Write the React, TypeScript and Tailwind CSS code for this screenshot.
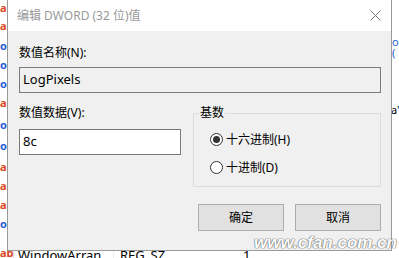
import React from 'react';

const rows: { y: number; kind: 'ab' | 'bin' }[] = [
  { y: -2, kind: 'ab' },
  { y: 16, kind: 'ab' },
  { y: 36, kind: 'bin' },
  { y: 55, kind: 'bin' },
  { y: 74, kind: 'bin' },
  { y: 93, kind: 'ab' },
  { y: 115, kind: 'bin' },
  { y: 136, kind: 'bin' },
  { y: 157, kind: 'ab' },
  { y: 176, kind: 'ab' },
  { y: 195, kind: 'ab' },
  { y: 214, kind: 'bin' },
];

function Radio({ checked, label }: { checked?: boolean; label: string }) {
  return (
    <div className="flex items-center h-[13px]">
      <span className="w-[13px] h-[13px] rounded-full border border-[#333] bg-white flex items-center justify-center">
        {checked && <span className="w-[7px] h-[7px] rounded-full bg-[#333]" />}
      </span>
      <span className="ml-[3px] text-[12px] leading-[16px] text-black">{label}</span>
    </div>
  );
}

export default function App() {
  return (
    <div className="relative w-[399px] h-[258px] overflow-hidden bg-white font-['Noto_Sans','Noto_Sans_CJK_SC',sans-serif]">
      {/* regedit list behind the dialog */}
      <div className="absolute left-0 top-0 w-[8px] h-[232px] overflow-hidden">
        {rows.map((r, i) => (
          <span
            key={i}
            className={`absolute left-0 text-[11px] font-bold leading-none ${
              r.kind === 'ab' ? 'text-[#d9481f]' : 'text-[#2a5bd7]'
            }`}
            style={{ top: r.y + 4 }}
          >
            {r.kind === 'ab' ? 'al' : 'ol'}
          </span>
        ))}
      </div>
      <div className="absolute left-0 top-[247px] flex items-start h-[14px] text-[13px] leading-[16px] text-black">
        <span className="w-[13px] text-[11px] font-bold text-[#d9481f] leading-[12px]">ab</span>
        <span className="w-[100px] pl-[4px] border-l border-[#ddd]">WindowArran...</span>
        <span className="w-[130px] pl-[6px] border-l border-[#eee]">REG_SZ</span>
        <span>1</span>
      </div>
      <span className="absolute left-[392px] top-[36px] text-[11px] leading-none text-[#2a5bd7]">o (</span>
      <span className="absolute left-[391px] top-[104px] text-[11px] leading-none text-black">a'</span>

      {/* dialog */}
      <div className="absolute left-[7px] top-0 w-[385px] h-[251px] border-x border-b border-[#9a9a9a] bg-[#f0f0f0] flex flex-col">
        <div className="h-[31px] bg-white flex items-center justify-between pl-[9px] pr-[9px]">
          <span className="text-[12px] leading-[16px] text-[#999]">编辑 DWORD (32 位)值</span>
          <svg width="11" height="11" viewBox="0 0 11 11" className="mr-[1px]">
            <path d="M0.5 0.5 L10.5 10.5 M10.5 0.5 L0.5 10.5" stroke="#777" strokeWidth="1" />
          </svg>
        </div>
        <div className="flex flex-col pl-[11px] pr-[10px] pt-[14px]">
          <div className="text-[12px] leading-[16px] text-black">数值名称(N):</div>
          <div className="mt-[6px] h-[26px] border border-[#7a7a7a] bg-[#f0f0f0] flex items-center pl-[3px] text-[13px] text-black">
            LogPixels
          </div>
          <div className="flex">
            <div className="flex flex-col w-[162px]">
              <div className="mt-[12px] text-[12px] leading-[16px] text-black">数值数据(V):</div>
              <div className="mt-[8px] h-[26px] border border-[#7a7a7a] bg-white flex items-center pl-[3px] text-[13px] text-black">
                8c
              </div>
            </div>
            <div className="relative ml-[12px] mt-[20px] flex-1 h-[74px] border border-[#dcdcdc] flex flex-col pl-[16px] pt-[19px] gap-[15px]">
              <span className="absolute left-[5px] -top-[9px] px-[1px] bg-[#f0f0f0] text-[12px] leading-[16px] text-black">基数</span>
              <Radio checked label="十六进制(H)" />
              <Radio label="十进制(D)" />
            </div>
          </div>
          <div className="mt-[17px] flex justify-end gap-[11px]">
            <button className="w-[86px] h-[27px] bg-[#e1e1e1] border border-[#adadad] text-[12px] text-black">确定</button>
            <button className="w-[86px] h-[27px] bg-[#e1e1e1] border border-[#adadad] text-[12px] text-black">取消</button>
          </div>
        </div>
      </div>

      {/* watermark */}
      <span className="absolute left-[254px] top-[233px] text-[17px] font-bold italic leading-[20px] text-white font-['Liberation_Sans',sans-serif] [text-shadow:0_0_1px_#666,0_0_1px_#666,0_0_1px_#666]">
        www.cfan.com.cn
      </span>
    </div>
  );
}
